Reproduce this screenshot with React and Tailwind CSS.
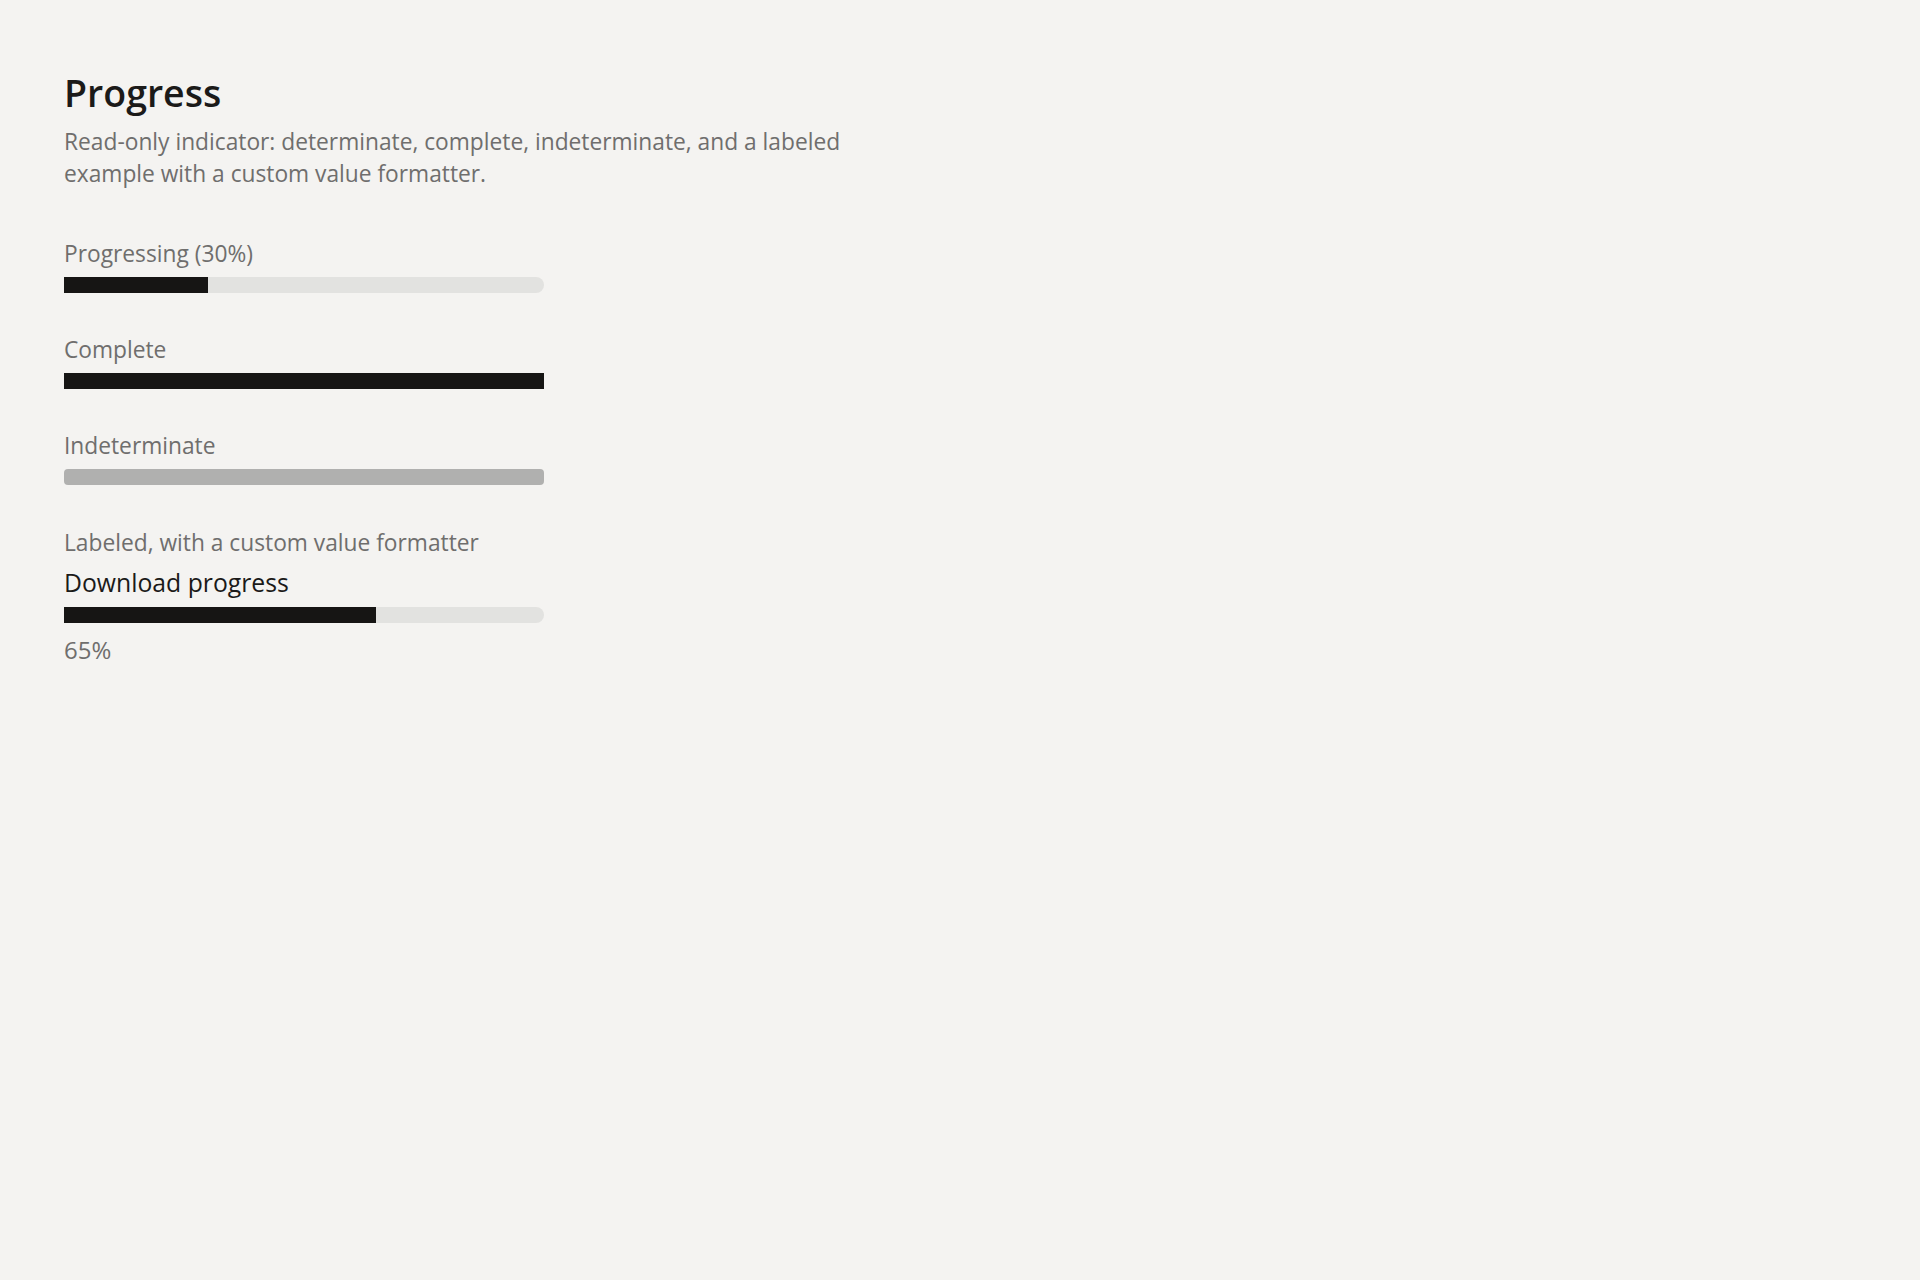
import React from 'react'

const font = { fontFamily: '"Open Sans", "Noto Sans", sans-serif' }

function Bar({ value, indeterminate }) {
  if (indeterminate) {
    return <div className="h-4 w-[480px] rounded-[4px] bg-[#b0b0af]" />
  }
  return (
    <div className="h-4 w-[480px] rounded-full bg-[#e2e2e0]">
      <div className="h-full bg-[#161514]" style={{ width: `${value}%` }} />
    </div>
  )
}

function Row({ label, value, indeterminate }) {
  return (
    <div className="flex flex-col">
      <span className="text-[22.75px] leading-[28px] text-[#6f6e6d]">{label}</span>
      <div className="mt-[9px]">
        <Bar value={value} indeterminate={indeterminate} />
      </div>
    </div>
  )
}

export default function App() {
  return (
    <div className="min-h-screen bg-[#f4f3f1] pl-16 pt-[71px]" style={font}>
      <h1 className="text-[37.5px] leading-[44px] font-semibold text-[#1b1a19]">Progress</h1>
      <p className="mt-[11px] max-w-[830px] text-[22.75px] leading-[32px] text-[#6f6e6d]">
        Read-only indicator: determinate, complete, indeterminate, and a labeled example with a custom value formatter.
      </p>

      <div className="mt-[50px] flex flex-col gap-[43px]">
        <Row label="Progressing (30%)" value={30} />
        <Row label="Complete" value={100} />
        <Row label="Indeterminate" indeterminate />
      </div>

      {/* labeled example */}
      <div className="mt-[44px] flex flex-col">
        <span className="text-[22.75px] leading-[28px] text-[#6f6e6d]">Labeled, with a custom value formatter</span>
        <span className="mt-[10px] text-[24.75px] leading-[32px] text-[#1b1a19]">Download progress</span>
        <div className="mt-2">
          <Bar value={65} />
        </div>
        <span className="mt-[13px] text-[24px] leading-[28px] text-[#6f6e6d]">65%</span>
      </div>
    </div>
  )
}
